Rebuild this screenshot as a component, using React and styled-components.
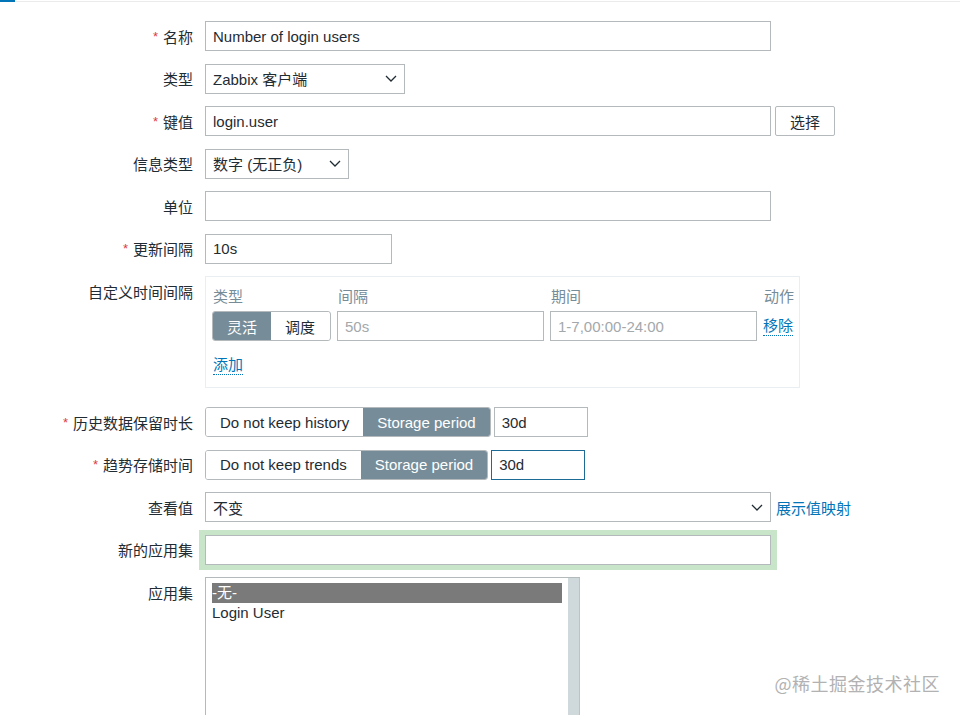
import React from 'react';
import styled, { createGlobalStyle } from 'styled-components';

const GlobalStyle = createGlobalStyle`
  html, body {
    margin: 0;
    padding: 0;
    background: #ffffff;
    width: 960px;
    height: 715px;
    overflow: hidden;
    font-family: "Liberation Sans", Arial, "Noto Sans CJK SC", sans-serif;
    font-size: 15px;
    color: #1f2c33;
  }
  * {
    box-sizing: border-box;
  }
`;

const Chevron = () => (
  <svg width="12" height="7" viewBox="0 0 12 7">
    <polyline points="1,1 6,6 11,1" fill="none" stroke="#1f2c33" strokeWidth="1.3" />
  </svg>
);

const App = () => {
  return (
    <Page>
      <GlobalStyle />
      <TopRule>
        <TabMark />
        <RuleLine />
      </TopRule>

      <Form>
        <Row>
          <Label required>名称</Label>
          <TextBox $width={566} defaultValue="Number of login users" />
        </Row>

        <Row>
          <Label>类型</Label>
          <Select $width={200}>
            <span>Zabbix 客户端</span>
            <Chevron />
          </Select>
        </Row>

        <Row>
          <Label required>键值</Label>
          <Inline $gap={4}>
            <TextBox $width={566} defaultValue="login.user" />
            <PlainButton>选择</PlainButton>
          </Inline>
        </Row>

        <Row>
          <Label>信息类型</Label>
          <Select $width={144}>
            <span>数字 (无正负)</span>
            <Chevron />
          </Select>
        </Row>

        <Row>
          <Label>单位</Label>
          <TextBox $width={566} />
        </Row>

        <Row>
          <Label required>更新间隔</Label>
          <TextBox $width={187} defaultValue="10s" />
        </Row>

        <Row $top $extra={6.5}>
          <Label>自定义时间间隔</Label>
          <IntervalBox>
            <IntervalGrid>
              <ColHead>类型</ColHead>
              <ColHead>间隔</ColHead>
              <ColHead>期间</ColHead>
              <ColHead>动作</ColHead>

              <Segmented>
                <SegButton $active>灵活</SegButton>
                <SegButton>调度</SegButton>
              </Segmented>
              <TextBox $width={207} placeholder="50s" />
              <TextBox $width={207} placeholder="1-7,00:00-24:00" />
              <DottedLink>移除</DottedLink>
            </IntervalGrid>
            <AddLine>
              <DottedLink>添加</DottedLink>
            </AddLine>
          </IntervalBox>
        </Row>

        <Row>
          <Label required>历史数据保留时长</Label>
          <Inline $gap={3}>
            <Segmented>
              <SegButton>Do not keep history</SegButton>
              <SegButton $active>Storage period</SegButton>
            </Segmented>
            <TextBox $width={94} defaultValue="30d" />
          </Inline>
        </Row>

        <Row>
          <Label required>趋势存储时间</Label>
          <Inline $gap={3}>
            <Segmented>
              <SegButton>Do not keep trends</SegButton>
              <SegButton $active>Storage period</SegButton>
            </Segmented>
            <TextBox $width={94} $focused defaultValue="30d" />
          </Inline>
        </Row>

        <Row>
          <Label>查看值</Label>
          <Inline $gap={5}>
            <Select $width={566}>
              <span>不变</span>
              <Chevron />
            </Select>
            <PlainLink>展示值映射</PlainLink>
          </Inline>
        </Row>

        <Row>
          <Label>新的应用集</Label>
          <TextBox $width={566} $glow />
        </Row>

        <Row $top>
          <Label>应用集</Label>
          <ListBox>
            <Options>
              <Option $selected>-无-</Option>
              <Option>Login User</Option>
            </Options>
            <ScrollTrack />
          </ListBox>
        </Row>
      </Form>

      <Watermark>@稀土掘金技术社区</Watermark>
    </Page>
  );
};

const Page = styled.div`
  position: relative;
  width: 960px;
  height: 715px;
  overflow: hidden;
`;

const TopRule = styled.div`
  display: flex;
  height: 2px;
`;

const TabMark = styled.div`
  width: 15px;
  height: 2px;
  background: #0275b8;
`;

const RuleLine = styled.div`
  flex: 1;
  height: 1px;
  margin-top: 1px;
  background: #e9ebec;
`;

const Form = styled.ul`
  list-style: none;
  margin: 0;
  padding: 19px 0 0;
  display: flex;
  flex-direction: column;
  gap: 12.5px;
`;

const Row = styled.li`
  display: flex;
  align-items: ${({ $top }) => ($top ? 'flex-start' : 'center')};
  gap: 12px;
  margin-bottom: ${({ $extra }) => $extra || 0}px;
`;

const LabelText = styled.label`
  flex: none;
  width: 193px;
  height: 30px;
  display: flex;
  align-items: center;
  justify-content: flex-end;
  color: #1f2c33;
  white-space: nowrap;
`;

const Asterisk = styled.span`
  color: #dc3c3c;
  font-size: 13px;
  margin-right: 5px;
  line-height: 1;
`;

const Label = ({ required, children }) => (
  <LabelText>
    {required && <Asterisk>*</Asterisk>}
    <span>{children}</span>
  </LabelText>
);

const Inline = styled.div`
  display: flex;
  align-items: center;
  gap: ${({ $gap }) => $gap}px;
`;

const TextBox = styled.input`
  width: ${({ $width }) => $width}px;
  height: 30px;
  padding: 0 7px;
  margin: 0;
  border: 1px solid ${({ $focused }) => ($focused ? '#1c6a96' : '#b4b9bc')};
  border-radius: 0;
  background: #ffffff;
  font: inherit;
  font-size: 15px;
  color: #1f2c33;
  outline: none;
  box-shadow: ${({ $glow }) => ($glow ? '-1px 0 0 5px #c9e5c9, 1px 0 0 5px #c9e5c9' : 'none')};

  &::placeholder {
    color: #a3a8ab;
  }
`;

const Select = styled.div`
  width: ${({ $width }) => $width}px;
  height: 30px;
  display: flex;
  align-items: center;
  justify-content: space-between;
  padding: 0 7px 0 7px;
  border: 1px solid #b4b9bc;
  background: #ffffff;
  color: #1f2c33;
  white-space: nowrap;
`;

const PlainButton = styled.button`
  width: 60px;
  height: 30px;
  border: 1px solid #b4b9bc;
  border-radius: 2px;
  background: #ffffff;
  font: inherit;
  font-size: 15px;
  color: #1f2c33;
  padding: 0;
`;

const Segmented = styled.div`
  display: inline-flex;
  height: 30px;
  border-radius: 3px;
  overflow: hidden;
  border: 1px solid #b4b9bc;
`;

const SegButton = styled.span`
  display: inline-flex;
  align-items: center;
  padding: 0 14px;
  height: 100%;
  background: ${({ $active }) => ($active ? '#768d99' : '#ffffff')};
  color: ${({ $active }) => ($active ? '#ffffff' : '#1f2c33')};
  white-space: nowrap;
`;

const IntervalBox = styled.div`
  width: 595px;
  border: 1px solid #ebeef0;
  padding: 4px 6px 7px;
`;

const IntervalGrid = styled.div`
  display: grid;
  grid-template-columns: 119px 207px 207px 1fr;
  grid-template-rows: 28px 30px;
  column-gap: 6px;
  row-gap: 2px;
  align-items: center;
  white-space: nowrap;
`;

const ColHead = styled.span`
  color: #768d99;
  padding-left: 1px;
`;

const AddLine = styled.div`
  margin-top: 9px;
  height: 30px;
  display: flex;
  align-items: center;
  padding-left: 1px;
`;

const DottedLink = styled.a`
  color: #0275b8;
  text-decoration: none;
  border-bottom: 1px dotted #0275b8;
  line-height: 18px;
  cursor: pointer;
  justify-self: start;
`;

const PlainLink = styled.a`
  color: #0275b8;
  text-decoration: none;
  cursor: pointer;
`;

const ListBox = styled.div`
  width: 375px;
  height: 160px;
  display: flex;
  border: 1px solid #b4b9bc;
  border-right: none;
  background: #ffffff;
`;

const Options = styled.div`
  flex: 1;
  padding: 5px 6px 0 6px;
`;

const Option = styled.div`
  height: 20px;
  line-height: 20px;
  background: ${({ $selected }) => ($selected ? '#7a7a7a' : 'transparent')};
  color: ${({ $selected }) => ($selected ? '#ffffff' : '#1f2c33')};
  white-space: nowrap;
`;

const ScrollTrack = styled.div`
  width: 12px;
  background: #cfd9dc;
  border-right: 1px solid #b8c4c8;
`;

const Watermark = styled.div`
  position: absolute;
  right: 20px;
  bottom: 19px;
  font-family: "Noto Sans CJK SC", sans-serif;
  font-size: 18px;
  color: #b2b2b2;
  text-shadow: 0 0 2px #ffffff;
  letter-spacing: 0.5px;
`;

export default App;
